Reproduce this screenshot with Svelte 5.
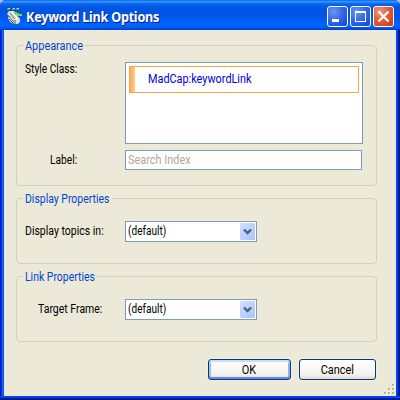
<script>
  const frames = [
    { title: 'Display Properties', label: 'Display topics in:', cls: 'display' },
    { title: 'Link Properties', label: 'Target Frame:', cls: 'link' }
  ];
</script>

<main class="window">
  <header>
    <svg class="logo" width="16" height="16" viewBox="0 0 16 16">
      <path d="M0 0h3v2H0zM5 0h3v2H5zM9 0h3v2H9z" fill="#4fa044" />
      <path d="M1 0h2v1H1zM6 0h2v1H6zM10 0h2v1h-2z" fill="#b8e878" />
      <path d="M2 3h5l3 4 3 4v3l-2 2H7l-4-2-2-4 1-2-2-2z" fill="#d9ddd5" />
      <path d="M3 5l5 6M2 8l4 5h3" fill="none" stroke="#68736b" stroke-width="1" />
      <path d="M5 4l5 6-1 2" fill="none" stroke="#fff" stroke-width="1.5" />
      <path d="M2 11l4 4h3" fill="none" stroke="#4b6055" stroke-width="1" />
      <path d="M7 4h3v1h2v1h3v2h-4v1h-1V7H8z" fill="#7ed04a" />
    </svg>
    <h1><span class="t-head">Keyword Link Options</span></h1>
    <div class="controls">
      <button class="ctl" aria-label="Minimize"><svg width="21" height="21"><path d="M5 13h7v3H5z" fill="#fff" /></svg></button>
      <button class="ctl" aria-label="Maximize"><svg width="21" height="21"><path d="M5 5h11v11H5zM6 7v8h9V7z" fill="#fff" fill-rule="evenodd" /></svg></button>
      <button class="ctl close" aria-label="Close"><svg width="21" height="21"><path d="M5.5 5.5l10 10M15.5 5.5l-10 10" stroke="#fff" stroke-width="2.3" /></svg></button>
    </div>
  </header>

  <div class="body">
    <section class="group appearance">
      <h2><span class="t-app">Appearance</span></h2>
      <div class="row list-row">
        <span class="label"><span class="t-style">Style Class:</span></span>
        <div class="list"><div class="item"><span class="t-item">MadCap:keywordLink</span></div></div>
      </div>
      <div class="row label-row">
        <span class="label indent"><span class="t-label">Label:</span></span>
        <div class="input"><span class="t-search">Search Index</span></div>
      </div>
    </section>

    {#each frames as f}
      <section class="group {f.cls}">
        <h2><span class="t-title">{f.title}</span></h2>
        <div class="row combo-row">
          <span class="label"><span class="t-name">{f.label}</span></span>
          <div class="combo">
            <span class="t-default">(default)</span>
            <i><svg width="15" height="17"><path d="M4 6.5l3.5 3.5L11 6.5" fill="none" stroke="#4d6185" stroke-width="2.4" /></svg></i>
          </div>
        </div>
      </section>
    {/each}

    <footer>
      <button class="btn ok"><span class="t-ok">OK</span></button>
      <button class="btn cancel"><span class="t-cancel">Cancel</span></button>
    </footer>
  </div>

  <svg class="grip" width="12" height="12" shape-rendering="crispEdges">
    <path d="M9 1h2v2H9zM5 5h2v2H5zM9 5h2v2H9zM1 9h2v2H1zM5 9h2v2H5zM9 9h2v2H9z" fill="#fff" />
    <path d="M8 0h2v2H8zM4 4h2v2H4zM8 4h2v2H8zM0 8h2v2H0zM4 8h2v2H4zM8 8h2v2H8z" fill="#b8b4a2" />
  </svg>
</main>

<style>
  :global(body) { background: #a9b8e4; }
  * { box-sizing: border-box; }
  .window {
    position: relative;
    width: 400px;
    height: 400px;
    overflow: hidden;
    border-radius: 6px 6px 0 0;
    background:
      linear-gradient(0deg, #00138c 0 1px, #001da0 1px 2px, #0046ee 2px 4px, transparent 4px),
      linear-gradient(90deg, #0019cf 0 1px, #0831d9 1px 2px, #166aee 2px 3px, #0855dd 3px 4px, transparent 4px 396px, #0046ee 396px 398px, #001da0 398px 399px, #00138c 399px),
      #0048f1;
    font: 12px/14px Roboto, "Liberation Sans", sans-serif;
    color: #000;
  }
  header {
    height: 30px;
    padding: 6px 6px 0 7px;
    display: flex;
    background: linear-gradient(#0058e0 0, #2a8cff 1px, #3d95ff 2px, #1272f5 3px, #0361ec 5px, #0055e0 8px, #0054e3 15px, #005cf4 20px, #0066ff 25px, #0061fc 27px, #0048d8 29px, #003dd7 30px);
  }
  .logo { margin-top: 2px; margin-right: 3px; flex: none; }
  h1 {
    margin: 1px 0 0;
    font: bold 14px/20px "Noto Sans", "Open Sans", sans-serif;
    color: #fff;
    text-shadow: 1px 1px #0a1883;
    white-space: nowrap;
  }
  .controls { display: flex; gap: 2px; margin-left: auto; }
  .ctl {
    width: 21px;
    height: 21px;
    padding: 0;
    border: 1px solid #fff;
    border-radius: 3px;
    background: radial-gradient(circle at 30% 25%, #6c97f3 0, #3b6eea 40%, #2459e2 70%, #1646c4);
  }
  .close { background: radial-gradient(circle at 30% 25%, #f09a80 0, #e5603c 40%, #dc4a20 70%, #b8320c); }
  .ctl svg { display: block; margin: -1px; }
  .body {
    height: 366px;
    margin: 0 4px 4px;
    padding: 15px 19px 0 12px;
    background: #ece9d8;
    display: flex;
    flex-direction: column;
  }
  .group {
    width: 361px;
    height: 66px;
    flex: none;
    margin-bottom: 12px;
    border: 1px solid #d0d0bf;
    border-radius: 4px;
  }
  .appearance { height: 141px; }
  h2 {
    width: max-content;
    height: 14px;
    margin: -7px 0 0 6px;
    padding: 0 2px;
    background: #ece9d8;
    color: #0046d5;
    font: inherit;
  }
  span { white-space: nowrap; }
  .row { display: flex; padding-left: 8px; }
  .label { width: 100px; flex: none; }
  .list-row { margin-top: 9px; }
  .list {
    width: 238px;
    height: 82px;
    padding: 3px;
    border: 1px solid #7f9db9;
    background: #fff;
  }
  .item {
    height: 27px;
    padding: 5px 0 0 18px;
    border: 1px solid #ffa448;
    color: #0000e6;
    background: linear-gradient(90deg, #ffab58, #ffcb8c) 0 0 / 5px 100% no-repeat #fff;
  }
  .label-row { margin-top: 6px; }
  .label-row .label { padding-top: 3px; }
  .label.indent { padding-left: 25px; }
  .input {
    width: 237px;
    height: 20px;
    padding: 2px;
    border: 1px solid #7f9db9;
    background: #fff;
    color: #aca899;
  }
  .combo-row { margin-top: 15px; }
  .combo-row .label { padding-top: 3px; }
  .link .label { padding-left: 13px; }
  .combo {
    width: 132px;
    height: 21px;
    padding: 1px 1px 0 2px;
    border: 1px solid #7f9db9;
    background: #fff;
    display: flex;
    justify-content: space-between;
  }
  .combo > span { padding-top: 1px; }
  .combo i {
    width: 15px;
    height: 17px;
    border-radius: 1px;
    background: linear-gradient(135deg, #d2e0fe, #b8cffc 60%, #abc4f8);
  }
  .combo svg { display: block; }
  footer { display: flex; gap: 8px; justify-content: flex-end; margin-top: 5px; width: 360px; }
  .btn {
    height: 21px;
    padding: 0;
    border: 1px solid #003c74;
    border-radius: 3px;
    font: inherit;
    color: #000;
    background: linear-gradient(#fff, #f4f3ee 75%, #dfdcd2);
    box-shadow: 0 0 0 1px #f2f0e5;
  }
  .ok {
    width: 83px;
    box-shadow: inset 0 2px #cbddfb, inset 0 -2px #6a88e8, inset 2px 0 #a4bff1, inset -2px 0 #94b0ec, 0 0 0 1px #f2f0e5;
  }
  .cancel { width: 77px; }
  .grip { position: absolute; right: 4px; bottom: 4px; }

  /* Narrow UI lettering */
  [class^='t-'] { display: inline-block; transform-origin: 0 50%; }
  .t-head { letter-spacing: -0.3px; transform: scaleX(0.905); }
  .t-app { transform: scaleX(0.91); margin-right: -6px; }
  .t-style, .t-label { transform: scaleX(0.85); }
  .t-search { transform: scaleX(0.91); }
  .t-item { transform: scaleX(0.905); }
  .t-title { transform: scaleX(0.87); margin-right: -11px; }
  .t-name { transform: scaleX(0.875); }
  .t-default { transform: scaleX(0.84); }
  .t-ok, .t-cancel { transform: scaleX(0.91); transform-origin: 50% 50%; margin-right: 1px; }
</style>
